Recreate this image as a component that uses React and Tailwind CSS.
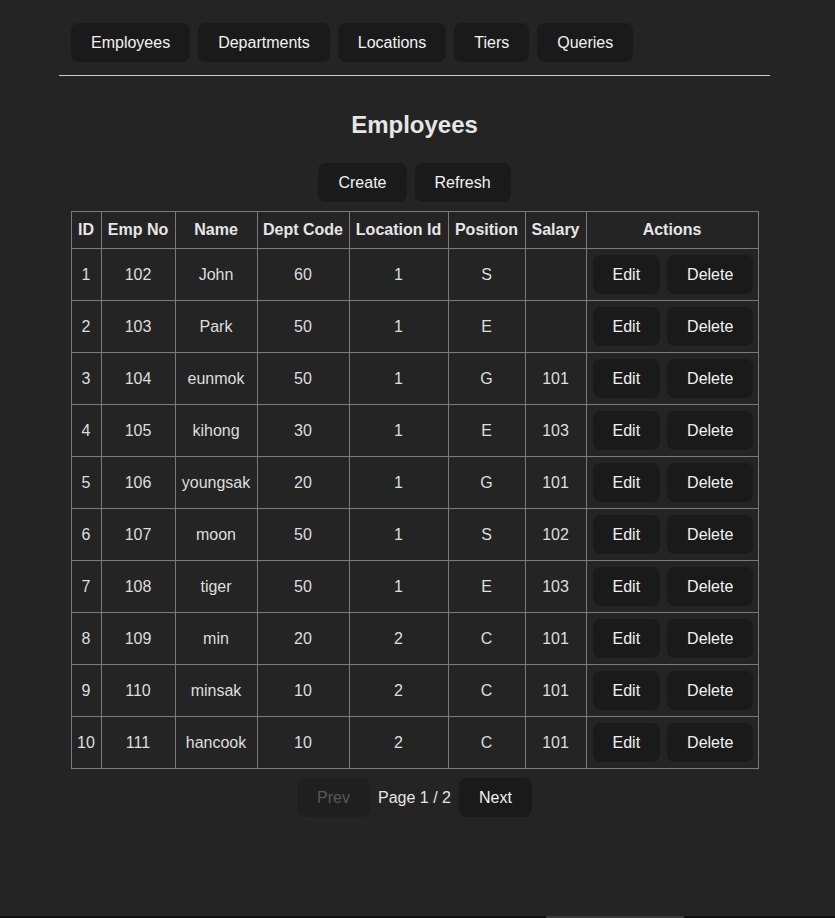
import React from "react";

const rows = [
  [1, 102, "John", 60, 1, "S", ""],
  [2, 103, "Park", 50, 1, "E", ""],
  [3, 104, "eunmok", 50, 1, "G", 101],
  [4, 105, "kihong", 30, 1, "E", 103],
  [5, 106, "youngsak", 20, 1, "G", 101],
  [6, 107, "moon", 50, 1, "S", 102],
  [7, 108, "tiger", 50, 1, "E", 103],
  [8, 109, "min", 20, 2, "C", 101],
  [9, 110, "minsak", 10, 2, "C", 101],
  [10, 111, "hancook", 10, 2, "C", 101],
];

function Btn({ children, disabled }) {
  return (
    <button
      className={
        "h-[39px] rounded-lg border border-transparent px-[19px] text-[16px] leading-none " +
        (disabled ? "bg-[#1f1f1f] text-[#595959]" : "bg-[#1a1a1a] text-[#f2f2f2]")
      }
    >
      {children}
    </button>
  );
}

export default function App() {
  const headers = ["ID", "Emp No", "Name", "Dept Code", "Location Id", "Position", "Salary", "Actions"];
  const widths = [30, 74, 82, 92, 99, 77, 61, 172];
  return (
    <div className="min-h-[918px] bg-[#242424] font-['Liberation_Sans',Arial,sans-serif] text-[16px] text-[#dedede]">
      <div className="ml-[59px] w-[711px] pt-[23px]">
        <nav className="flex gap-2 pl-3">
          {["Employees", "Departments", "Locations", "Tiers", "Queries"].map((t) => (
            <Btn key={t}>{t}</Btn>
          ))}
        </nav>
        <div className="mt-[13px] h-px bg-[#d0d0d0]" />
        <h2 className="mt-[35px] text-center text-[24px] font-bold leading-[27px] text-[#e6e6e6]">Employees</h2>
        <div className="mt-[25px] flex justify-center gap-2">
          <Btn>Create</Btn>
          <Btn>Refresh</Btn>
        </div>
        <table className="mx-auto mt-[9px] w-[687px] table-fixed border-collapse text-center">
          <colgroup>
            {widths.map((w, i) => (
              <col key={i} style={{ width: w }} />
            ))}
          </colgroup>
          <thead>
            <tr>
              {headers.map((h) => (
                <th key={h} className="h-[37px] whitespace-nowrap border border-[#7a7a7a] p-0 font-bold leading-[18px] text-[#e6e6e6]">
                  {h}
                </th>
              ))}
            </tr>
          </thead>
          <tbody>
            {rows.map((r) => (
              <tr key={r[0]}>
                {r.map((c, i) => (
                  <td key={i} className="h-[52px] whitespace-nowrap border border-[#7a7a7a] p-0">
                    {c}
                  </td>
                ))}
                <td className="h-[52px] border border-[#7a7a7a] px-[6px] py-0">
                  <div className="flex gap-[7px]">
                    <Btn>Edit</Btn>
                    <Btn>Delete</Btn>
                  </div>
                </td>
              </tr>
            ))}
          </tbody>
        </table>
        <div className="mt-[9px] flex items-center justify-center gap-2">
          <Btn disabled>Prev</Btn>
          <span className="text-[#e6e6e6]">Page 1 / 2</span>
          <Btn>Next</Btn>
        </div>
      </div>
      <div className="fixed bottom-0 left-0 flex h-[2px] w-full bg-[#111111]">
        <div className="ml-[546px] h-full w-[138px] bg-[#3a3a3a]" />
      </div>
    </div>
  );
}
